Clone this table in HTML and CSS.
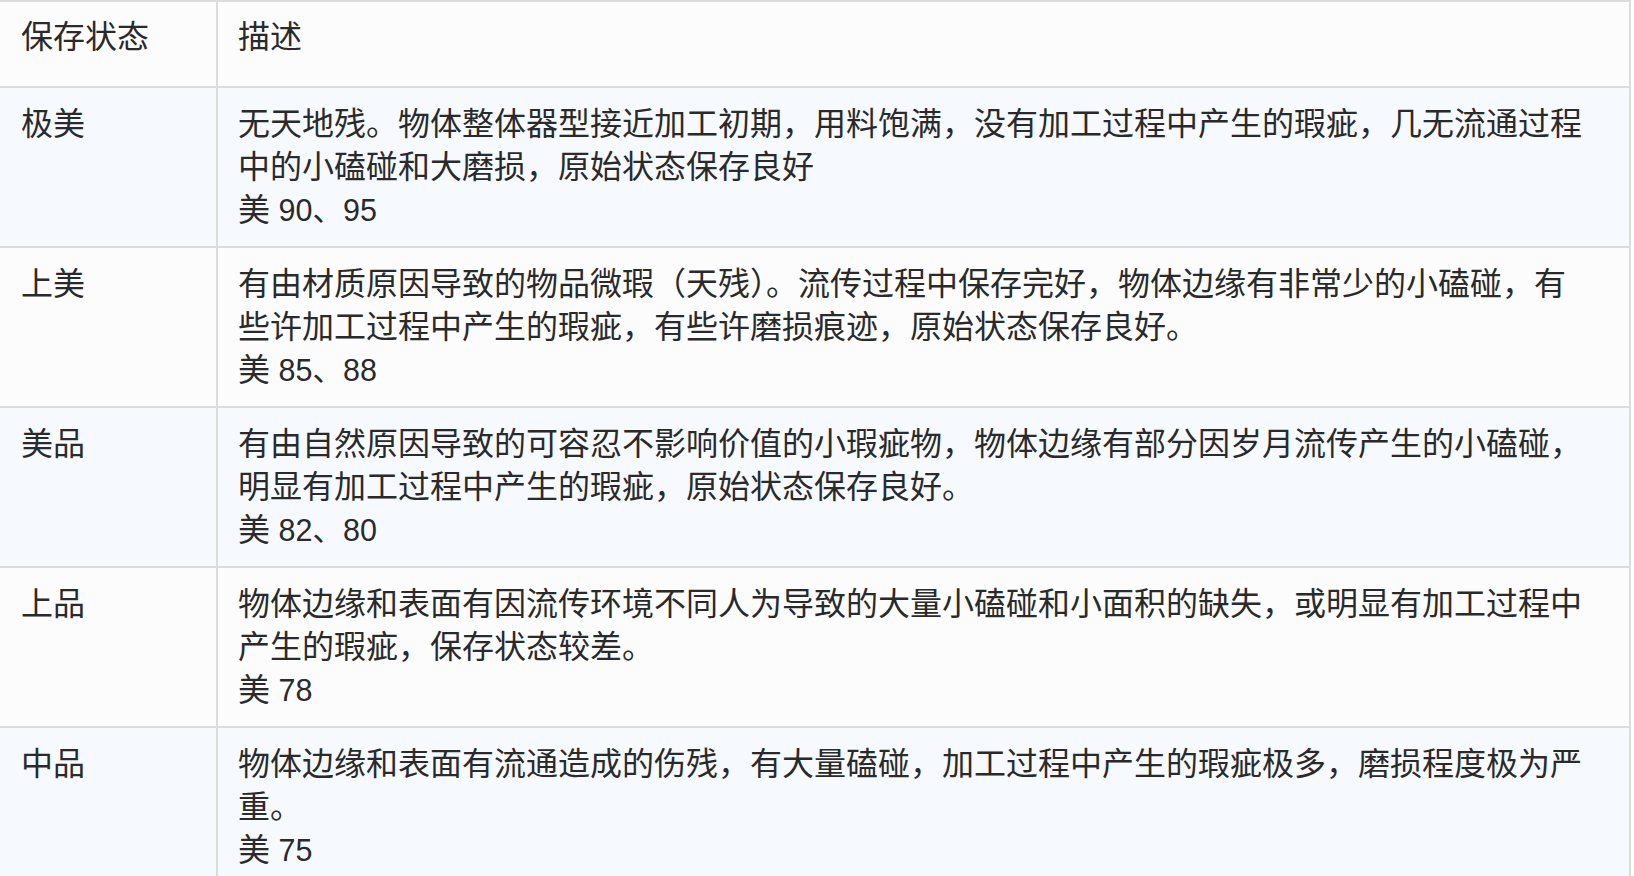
FILE: index.html
```html
<!DOCTYPE html>
<html lang="zh-CN">
<head>
<meta charset="utf-8">
<title>保存状态</title>
<link rel="stylesheet" href="styles.css">
</head>
<body>
<table class="grade-table">
  <thead>
    <tr>
      <th class="col-state">保存状态</th>
      <th class="col-desc">描述</th>
    </tr>
  </thead>
  <tbody>
    <tr class="row-alt">
      <td class="col-state">极美</td>
      <td class="col-desc">无天地残。物体整体器型接近加工初期，用料饱满，没有加工过程中产生的瑕疵，几无流通过程<br>中的小磕碰和大磨损，原始状态保存良好<br>美<span class="score"> 90、95</span></td>
    </tr>
    <tr>
      <td class="col-state">上美</td>
      <td class="col-desc">有由材质原因导致的物品微瑕（天残）。流传过程中保存完好，物体边缘有非常少的小磕碰，有<br>些许加工过程中产生的瑕疵，有些许磨损痕迹，原始状态保存良好。<br>美<span class="score"> 85、88</span></td>
    </tr>
    <tr class="row-alt">
      <td class="col-state">美品</td>
      <td class="col-desc">有由自然原因导致的可容忍不影响价值的小瑕疵物，物体边缘有部分因岁月流传产生的小磕碰，<br>明显有加工过程中产生的瑕疵，原始状态保存良好。<br>美<span class="score"> 82、80</span></td>
    </tr>
    <tr>
      <td class="col-state">上品</td>
      <td class="col-desc">物体边缘和表面有因流传环境不同人为导致的大量小磕碰和小面积的缺失，或明显有加工过程中<br>产生的瑕疵，保存状态较差。<br>美<span class="score"> 78</span></td>
    </tr>
    <tr class="row-alt">
      <td class="col-state">中品</td>
      <td class="col-desc">物体边缘和表面有流通造成的伤残，有大量磕碰，加工过程中产生的瑕疵极多，磨损程度极为严<br>重。<br>美<span class="score"> 75</span></td>
    </tr>
  </tbody>
</table>
</body>
</html>
```

FILE: styles.css
```css
html, body {
  margin: 0;
  padding: 0;
  background: #ffffff;
}

body {
  font-family: "Liberation Sans", "Noto Sans CJK SC", sans-serif;
  font-size: 32px;
  line-height: 43px;
  color: #2a2a2a;
  overflow: hidden;
}

.grade-table {
  border-collapse: collapse;
  width: 1631px;
  table-layout: fixed;
}

.grade-table th,
.grade-table td {
  text-align: left;
  vertical-align: top;
  border: 2px solid #dcdcdc;
  border-left: none;
  white-space: nowrap;
}

.grade-table th {
  font-weight: 400;
  padding: 14px 20px 27px 21px;
  background: #fcfcfd;
}

.grade-table td {
  padding: 15px 20px 14px 21px;
  background: #fcfcfd;
}

.grade-table tr.row-alt td {
  background: #f6f9fe;
}

.grade-table .col-state {
  width: 175px;
}

.grade-table td.col-desc,
.grade-table th.col-desc {
  padding-left: 20px;
}

.score {
  font-size: 30.5px;
  line-height: 1;
}
```
